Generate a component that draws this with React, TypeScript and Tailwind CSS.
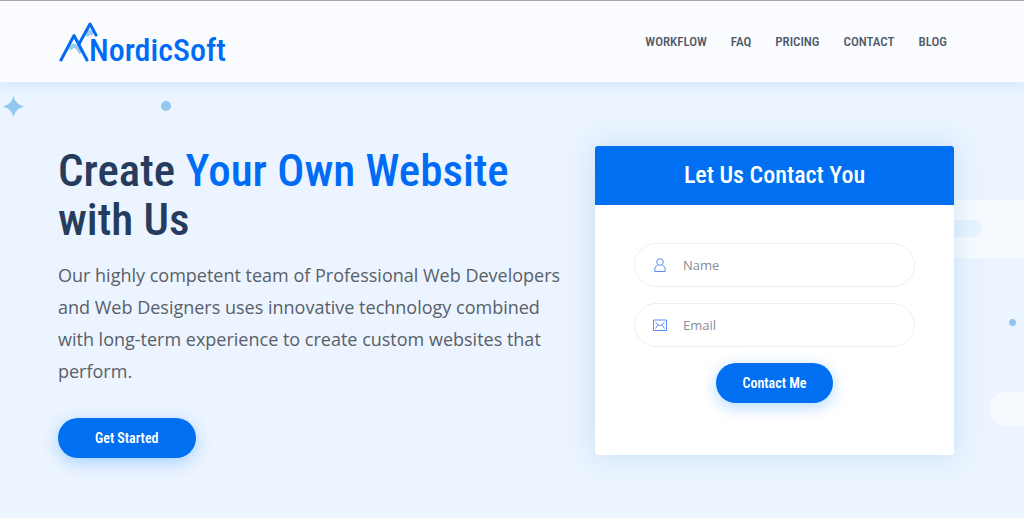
import React from "react";

const navItems = ["WORKFLOW", "FAQ", "PRICING", "CONTACT", "BLOG"];

function LogoMark() {
  return (
    <svg className="h-[40px] w-[40px] shrink-0" viewBox="0 0 40 40" fill="none" strokeLinecap="round" strokeLinejoin="round" aria-hidden="true">
      <path d="M11.500 27L15.500 23.500L19 25L23 31" stroke="#9ccbee" strokeWidth="4" strokeLinecap="butt" />
      <path d="M28.500 14L31.500 9.500L35 12.500" stroke="#9ccbee" strokeWidth="4" strokeLinecap="butt" />
      <path d="M3 38L16 13.500L29 38" stroke="#006cf5" strokeWidth="3" />
      <path d="M21 22L32 2L38 13" stroke="#006cf5" strokeWidth="3" />
    </svg>
  );
}

function Header() {
  return (
    <header className="relative z-10 border-t border-[#a9a9ad] bg-[#fbfcff] pr-9 pl-6 shadow-[0_2px_12px_rgba(120,180,240,0.25)]">
      <div className="mx-auto flex h-[81px] max-w-[896px] items-center justify-between">
        <a href="#" className="flex items-start pt-[3px] text-[#006cf5]">
          <LogoMark />
          <span className="-ml-[9px] pt-[13px] font-['Roboto_Condensed','Lato',sans-serif] text-[32px] leading-[30px] font-medium">NordicSoft</span>
        </a>
        <nav className="flex gap-6 pr-[7px]">
          {navItems.map((item) => (
            <a key={item} href={"#" + item.toLowerCase()} className="font-['Roboto_Condensed','Lato',sans-serif] text-[13px] leading-5 font-medium text-[#4c5768]">
              {item}
            </a>
          ))}
        </nav>
      </div>
    </header>
  );
}

function Decorations() {
  return (
    <div className="pointer-events-none absolute inset-0 overflow-hidden" aria-hidden="true">
      <svg className="absolute top-[14px] left-[3px] size-[21px]" viewBox="0 0 21 21" fill="#91c8ef">
        <path d="M10.500 0Q12.500 8.500 21 10.500Q12.500 12.500 10.500 21Q8.500 12.500 0 10.500Q8.500 8.500 10.500 0Z" />
      </svg>
      <span className="absolute top-[19px] left-[161px] size-[10px] rounded-full bg-[#94c9ef]" />
      <span className="absolute top-[118px] right-0 h-[58px] w-[200px] bg-[#f7fbff]" />
      <span className="absolute top-[138px] right-[42px] h-[17px] w-[100px] rounded-full bg-[#e8f3fe]" />
      <span className="absolute top-[237px] right-[8px] size-[7px] rounded-full bg-[#8ec6f1]" />
      <span className="absolute top-[310px] right-0 h-[34px] w-[34px] rounded-l-full bg-[#f7fbff]" />
    </div>
  );
}

function UserIcon() {
  return (
    <svg className="h-[14px] w-[14px] shrink-0" viewBox="0 0 14 14" fill="none" stroke="#5c8df6" aria-hidden="true">
      <circle cx="7" cy="4" r="3.300" />
      <path d="M4.700 7.200C2.500 8 1.700 9.500 1.700 13.500H12.300C12.300 9.500 11.500 8 9.300 7.200" />
    </svg>
  );
}

function MailIcon() {
  return (
    <svg className="h-[14px] w-[14px] shrink-0" viewBox="0 0 14 14" fill="none" stroke="#5c8df6" aria-hidden="true">
      <path d="M.5 2H13.500V12.500H.5Z" />
      <path d="M2.500 4.500L7 8L11.500 4.500M2.500 10.500L5 7M11.500 10.500L9 7" />
    </svg>
  );
}

function Field({ icon, label, type }: { icon: React.ReactNode; label: string; type: string }) {
  return (
    <label className="flex h-11 items-center gap-4 rounded-full border border-[#eceff2] bg-white px-[18px]">
      {icon}
      <input type={type} aria-label={label} placeholder={label} className="min-w-0 flex-1 bg-transparent font-['Open_Sans',sans-serif] text-[13px] leading-5 text-gray-700 outline-none placeholder:text-[#868d95]" />
    </label>
  );
}

function ContactCard() {
  return (
    <form className="w-full max-w-[359px] overflow-hidden rounded-[3px] bg-white shadow-[0_0_28px_rgba(130,185,225,0.35)]" onSubmit={(e) => e.preventDefault()}>
      <h2 className="bg-[#006ff2] py-[14px] text-center font-['Roboto_Condensed','Lato',sans-serif] text-[24px] leading-[31px] font-medium text-white">Let Us Contact You</h2>
      <div className="flex flex-col gap-4 px-[39px] pt-[38px] pb-[52px]">
        <Field icon={<UserIcon />} label="Name" type="text" />
        <Field icon={<MailIcon />} label="Email" type="email" />
        <button type="submit" className="h-10 self-center rounded-full bg-[#006ff2] px-[27px] font-['Roboto_Condensed','Lato',sans-serif] text-[14px] font-semibold text-white shadow-[0_4px_16px_rgba(0,130,250,0.3)]">
          Contact Me
        </button>
      </div>
    </form>
  );
}

export default function App() {
  return (
    <div className="flex min-h-screen flex-col bg-[#ebf4ff]">
      <Header />
      <main className="relative flex-1 pt-16 pr-9 pb-[60px] pl-6">
        <Decorations />
        <div className="relative mx-auto flex max-w-[896px] flex-wrap items-start justify-between gap-y-10 lg:flex-nowrap">
          <section className="max-w-[510px]">
            <h1 className="font-['Roboto_Condensed','Lato',sans-serif] text-[45px] leading-[49px] font-medium text-[#263c5c]">
              Create <span className="text-[#006cf5]">Your Own Website</span> with Us
            </h1>
            <p className="mt-[15px] font-['Open_Sans',sans-serif] text-[18px] leading-8 text-[#596068]">
              Our highly competent team of Professional Web Developers and Web Designers uses innovative technology combined with long-term experience to create custom websites that perform.
            </p>
            <button type="button" className="mt-[31px] h-10 rounded-full bg-[#006ff2] px-[37px] font-['Roboto_Condensed','Lato',sans-serif] text-[14px] font-semibold text-white shadow-[0_4px_16px_rgba(0,130,250,0.3)]">
              Get Started
            </button>
          </section>
          <ContactCard />
        </div>
      </main>
    </div>
  );
}
